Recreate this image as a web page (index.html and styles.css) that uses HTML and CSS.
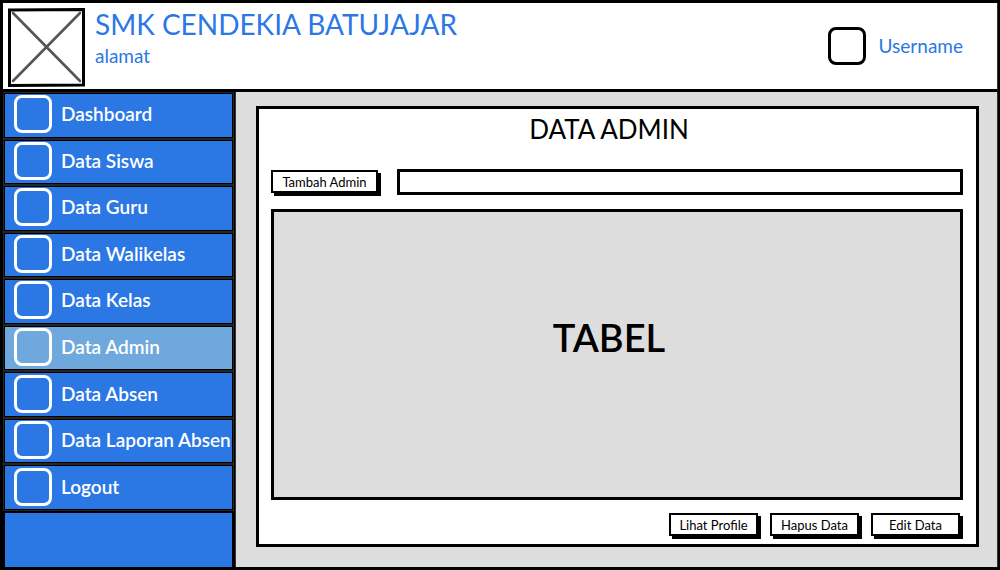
FILE: index.html
```html
<!DOCTYPE html>
<html lang="id">
<head>
<meta charset="utf-8">
<title>Data Admin - SMK Cendekia Batujajar</title>
<link rel="stylesheet" href="styles.css">
</head>
<body>
<div class="app">
  <header class="header">
    <svg class="logo" viewBox="0 0 77 79" aria-hidden="true">
      <path d="M1.5 2 L75.5 1.5 L75.5 77 L1.5 77.5 Z" fill="#fff" stroke="#000" stroke-width="3"/>
      <path d="M5 5 L72 73 M72 5 L5 73" fill="none" stroke="#555" stroke-width="2.6" stroke-linecap="round"/>
    </svg>
    <div class="school">
      <h1 class="school-name">SMK CENDEKIA BATUJAJAR</h1>
      <p class="school-address">alamat</p>
    </div>
    <div class="user">
      <span class="avatar"></span>
      <span class="username">Username</span>
    </div>
  </header>
  <div class="body">
    <nav class="sidebar">
      <a class="item" href="#"><span class="icon"></span>Dashboard</a>
      <a class="item" href="#"><span class="icon"></span>Data Siswa</a>
      <a class="item" href="#"><span class="icon"></span>Data Guru</a>
      <a class="item" href="#"><span class="icon"></span>Data Walikelas</a>
      <a class="item" href="#"><span class="icon"></span>Data Kelas</a>
      <a class="item active" href="#" aria-current="page"><span class="icon"></span>Data Admin</a>
      <a class="item" href="#"><span class="icon"></span>Data Absen</a>
      <a class="item" href="#"><span class="icon"></span>Data Laporan Absen</a>
      <a class="item" href="#"><span class="icon"></span>Logout</a>
      <div class="rest"></div>
    </nav>
    <main class="main">
      <section class="card">
        <h2 class="title">DATA ADMIN</h2>
        <div class="toolbar">
          <button class="button add" type="button">Tambah Admin</button>
          <input class="search" type="text" aria-label="Cari admin">
        </div>
        <div class="table-area">TABEL</div>
        <div class="actions">
          <button class="button" type="button">Lihat Profile</button>
          <button class="button" type="button">Hapus Data</button>
          <button class="button" type="button">Edit Data</button>
        </div>
      </section>
    </main>
  </div>
</div>
</body>
</html>
```
FILE: styles.css
```css
* { box-sizing: border-box; }

body {
  margin: 0;
  font-family: Lato, "Open Sans", sans-serif;
  color: #000;
}

.app {
  min-height: 100vh;
  display: flex;
  flex-direction: column;
  border: 3px solid #000;
  border-right-width: 2px;
  background: #000;
}

.header {
  display: flex;
  align-items: flex-start;
  padding: 5px 34px 2px 5px;
  border-bottom: 3px solid #000;
  border-right: 1px solid #333;
  background: #fff;
  color: #2b78e4;
}

.logo { width: 77px; height: 79px; flex: none; }

.school { flex: 1; padding-left: 10px; }

.school-name {
  margin: 0;
  font-size: 28px;
  line-height: 32px;
  font-weight: 400;
}

.school-address {
  margin: 6px 0 0;
  font-size: 19px;
  line-height: 20px;
}

.user {
  display: flex;
  align-items: center;
  gap: 13px;
  padding-top: 19px;
}

.avatar, .icon {
  flex: none;
  width: 38px;
  height: 38px;
  border: 3px solid #000;
  border-radius: 8px;
}

.username { font-size: 19px; line-height: 22px; }

.body { flex: 1; display: flex; }

.sidebar {
  width: 233px;
  flex: none;
  display: flex;
  flex-direction: column;
  gap: 4px;
  padding: 2px 3px 0 2px;
  border-right: 1px solid #333;
  background: #000;
}

.item {
  flex: 15 0 0;
  display: flex;
  align-items: center;
  gap: 9px;
  padding: 0 0 2px 9px;
  outline: 1px solid #262626;
  outline-offset: 1px;
  background: #2b78e4;
  color: #fff;
  font-size: 19px;
  line-height: 22px;
  font-weight: 600;
  text-decoration: none;
  white-space: nowrap;
}

.item.active { background: #6fa8dc; }

.icon { border-color: #fff; }

.rest { flex: 20 0 0; background: #2b78e4; }

.main {
  flex: 1;
  display: flex;
  padding: 14px 18px 20px 20px;
  border-right: 1px solid #333;
  background: #ddd;
}

.card {
  flex: 1;
  display: flex;
  flex-direction: column;
  padding: 4px 13px 6px 12px;
  border: 3px solid #000;
  background: #fff;
}

.title {
  margin: 0;
  padding-right: 16px;
  font-size: 26px;
  line-height: 32px;
  font-weight: 400;
  text-align: center;
}

.toolbar {
  display: flex;
  gap: 16px;
  margin: 24px 0 14px;
}

.button {
  width: 89px;
  height: 23px;
  margin: 1px 3px 2px 0;
  padding: 0;
  border: 2px solid #000;
  background: #fff;
  box-shadow: 3px 3px 0 #000;
  color: #000;
  font: 13px/18px Lato, "Open Sans", sans-serif;
}

.add { width: 107px; }

.search {
  flex: 1;
  min-width: 0;
  height: 26px;
  padding: 0 8px;
  border: 3px solid #000;
  border-radius: 0;
  background: #fff;
  font: 13px/18px Lato, "Open Sans", sans-serif;
}

.table-area {
  flex: 1;
  display: flex;
  align-items: center;
  justify-content: center;
  padding: 0 16px 36px 0;
  border: 3px solid #000;
  background: #ddd;
  font-size: 38px;
  line-height: 46px;
  font-weight: 600;
}

.actions {
  display: flex;
  justify-content: flex-end;
  gap: 9px;
  margin-top: 12px;
}
```
